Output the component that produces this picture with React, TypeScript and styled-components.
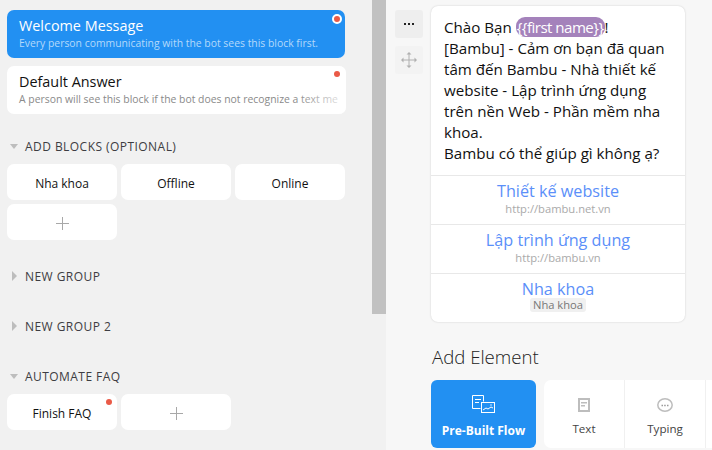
import React from 'react';
import styled, {createGlobalStyle} from 'styled-components';

const GlobalStyle = createGlobalStyle`
	html, body {
		margin: 0;
		height: 100%;
		overflow: hidden;
	}
	body {
		font-family: 'Open Sans', 'Noto Sans', sans-serif;
	}
`;

const Page = styled.div`
	display: flex;
	width: 712px;
	height: 450px;
	overflow: hidden;
	background: #f7f7f7;
`;

const Sidebar = styled.div`
	position: relative;
	flex: none;
	width: 386px;
	height: 450px;
	box-sizing: border-box;
	padding: 10px 0 0 7px;
	background: #f1f1f1;
	overflow: hidden;
`;

const Scrollbar = styled.div`
	position: absolute;
	top: 0;
	left: 372px;
	width: 14px;
	height: 314px;
	background: #c1c1c1;
`;

const MainBlock = styled.div<{$active?: boolean}>`
	position: relative;
	box-sizing: border-box;
	width: ${(p) => (p.$active ? '338px' : '339px')};
	height: 48px;
	margin-bottom: 8px;
	padding: 6px 12px 0;
	border-radius: 7px;
	background: ${(p) => (p.$active ? '#2290f2' : '#fff')};
	overflow: hidden;
`;

const BlockTitle = styled.div<{$active?: boolean}>`
	font-size: 14.4px;
	line-height: 20px;
	color: ${(p) => (p.$active ? '#fff' : '#111')};
	white-space: nowrap;
`;

const BlockHint = styled.div<{$active?: boolean}>`
	font-size: 10.4px;
	line-height: 14px;
	color: ${(p) => (p.$active ? '#b4d9fa' : '#8a8a8a')};
	white-space: nowrap;
`;

const HintFade = styled.div`
	position: absolute;
	top: 0;
	right: 0;
	width: 50px;
	height: 100%;
	background: linear-gradient(to right, rgba(255, 255, 255, 0), rgba(255, 255, 255, 0.85));
`;

const Dot = styled.span<{$ring?: boolean; $top: number; $right: number}>`
	position: absolute;
	z-index: 1;
	top: ${(p) => p.$top}px;
	right: ${(p) => p.$right}px;
	box-sizing: content-box;
	width: 6px;
	height: 6px;
	border-radius: 50%;
	background: #ea5a47;
	border: ${(p) => (p.$ring ? '2px solid #fff' : 'none')};
`;

const GroupHeader = styled.div<{$top: number}>`
	display: flex;
	align-items: center;
	height: 16px;
	margin-top: ${(p) => p.$top}px;
	padding-left: 3px;
	font-size: 12px;
	letter-spacing: 0.45px;
	color: #3d3d42;
	white-space: nowrap;
`;

const ArrowBox = styled.span`
	display: flex;
	justify-content: center;
	width: 8px;
	margin-right: 7px;
`;

const ArrowDown = styled.span`
	width: 0;
	height: 0;
	border-left: 4px solid transparent;
	border-right: 4px solid transparent;
	border-top: 5px solid #bdbdbd;
`;

const ArrowRight = styled.span`
	width: 0;
	height: 0;
	border-top: 5px solid transparent;
	border-bottom: 5px solid transparent;
	border-left: 5px solid #bdbdbd;
`;

const BlockGrid = styled.div`
	display: grid;
	grid-template-columns: repeat(3, 110px);
	grid-auto-rows: 36px;
	gap: 4px;
	margin-top: 10px;
`;

const SmallBlock = styled.div`
	position: relative;
	display: flex;
	align-items: center;
	justify-content: center;
	box-sizing: border-box;
	padding-top: 2px;
	border-radius: 7px;
	background: #fff;
	font-size: 12px;
	color: #111;
`;

const Plus = () => (
	<svg width='13' height='13' viewBox='0 0 13 13'>
		<path d='M6.5 0v13M0 6.5h13' stroke='#a8a8a8' strokeWidth='1' />
	</svg>
);

const Content = styled.div`
	flex: 1;
	display: flex;
	align-items: flex-start;
	padding: 6px 0 0 9px;
	min-width: 0;
`;

const ToolColumn = styled.div`
	flex: none;
	display: flex;
	flex-direction: column;
	gap: 8px;
	width: 28px;
	margin: 4px 8px 0 0;
`;

const ToolButton = styled.div<{$dark?: boolean}>`
	display: flex;
	align-items: center;
	justify-content: center;
	height: 28px;
	border-radius: 3px;
	background: ${(p) => (p.$dark ? '#eeeeee' : '#f3f3f3')};
`;

const Editor = styled.div`
	flex: none;
	width: 281px;
`;

const Card = styled.div`
	box-sizing: border-box;
	width: 254px;
	border-radius: 7px;
	background: #fff;
	box-shadow: 0 0 2px rgba(0, 0, 0, 0.18);
	overflow: hidden;
`;

const Message = styled.div`
	padding: 11px 12px 11px 13px;
	font-size: 15.15px;
	line-height: 21px;
	color: #111;
`;

const Variable = styled.span`
	padding: 0 1px;
	border-radius: 9px;
	background: #a482bb;
	color: #fff;
	letter-spacing: -0.55px;
`;

const CardButton = styled.div`
	height: 42px;
	border-top: 1px solid #e8e8e8;
	text-align: center;
	padding-top: 6px;
	box-sizing: content-box;
`;

const ButtonTitle = styled.div`
	font-size: 16.2px;
	line-height: 18px;
	color: #5b8ff9;
`;

const ButtonLink = styled.div`
	margin-top: 2px;
	font-size: 11.2px;
	line-height: 13px;
	color: #aaa;
`;

const ButtonTag = styled.div`
	width: fit-content;
	margin: 0 auto;
	padding: 0 3px;
	border-radius: 3px;
	background: #f0f0f0;
	font-size: 11.2px;
	line-height: 14px;
	color: #777;
`;

const SectionTitle = styled.div`
	margin: 22px 0 10px 1px;
	font-size: 18.6px;
	line-height: 26px;
	font-weight: 300;
	color: #222;
`;

const ElementRow = styled.div`
	display: flex;
	gap: 8px;
`;

const FlowButton = styled.div`
	flex: none;
	display: flex;
	flex-direction: column;
	align-items: center;
	width: 105px;
	height: 68px;
	box-sizing: border-box;
	padding-top: 15px;
	border-radius: 6px;
	background: #2290f2;
	color: #fff;
	font-size: 12px;
	font-weight: 700;
`;

const FlowLabel = styled.div`
	margin-top: 10px;
	line-height: 16px;
	white-space: nowrap;
`;

const ElementGroup = styled.div`
	display: flex;
	flex: 1;
	height: 68px;
	border-radius: 7px 0 0 7px;
	background: #fff;
`;

const ElementItem = styled.div`
	flex: none;
	display: flex;
	flex-direction: column;
	align-items: center;
	width: 81px;
	box-sizing: border-box;
	padding-top: 18px;
	border-right: 1px solid #f0f0f0;
	font-size: 11.6px;
	color: #444;
`;

const ElementLabel = styled.div`
	margin-top: 9px;
	line-height: 16px;
`;

const Dots = () => (
	<svg width='12' height='12' viewBox='0 0 12 12' fill='#222'>
		<rect x='1' y='5' width='2' height='2' />
		<rect x='5' y='5' width='2' height='2' />
		<rect x='9' y='5' width='2' height='2' />
	</svg>
);

const MoveIcon = () => (
	<svg width='16' height='16' viewBox='0 0 16 16' fill='none'>
		<path d='M8 1v14M1 8h14' stroke='#b0b0b0' strokeWidth='1' />
		<path
			d='M8 0l2.5 2.5h-5zM8 16l2.5-2.5h-5zM0 8l2.5-2.5v5zM16 8l-2.5-2.5v5z'
			fill='#b0b0b0'
		/>
	</svg>
);

const FlowIcon = () => (
	<svg width='23' height='18' viewBox='0 0 23 18' fill='none' stroke='#fff' strokeWidth='1'>
		<path d='M8.5 13.5H.5V.5h11v6' />
		<path d='M3 4.5h6M3 7.5h4' />
		<rect x='9.5' y='7.5' width='13' height='10' />
		<path d='M11 15l3-2 2 1 3-2 2 1' />
		<circle cx='19' cy='10' r='0.7' fill='#fff' stroke='none' />
	</svg>
);

const TextIcon = () => (
	<svg width='12' height='14' viewBox='0 0 12 14'>
		<path fillRule='evenodd' d='M0 0h12v14H0zM2 2v10h8V2z' fill='#bdbdbd' />
		<path d='M3 4h6v1.5H3zM3 7h4v1.5H3z' fill='#bdbdbd' />
	</svg>
);

const TypingIcon = () => (
	<svg width='16' height='14' viewBox='0 0 16 14' fill='none'>
		<ellipse cx='8' cy='7' rx='7.2' ry='6.2' stroke='#bdbdbd' strokeWidth='1.5' />
		<path d='M4.5 7.5h1.5M7.2 7.5h1.5M10 7.5h1.5' stroke='#9a9a9a' strokeWidth='1.5' />
	</svg>
);

const App: React.FC = () => {
	return (
		<Page>
			<GlobalStyle />
			<Sidebar>
				<Scrollbar />
				<MainBlock $active>
					<Dot $ring $top={4} $right={3} />
					<BlockTitle $active>Welcome Message</BlockTitle>
					<BlockHint $active>Every person communicating with the bot sees this block first.</BlockHint>
				</MainBlock>
				<MainBlock>
					<Dot $top={5} $right={6} />
					<BlockTitle>Default Answer</BlockTitle>
					<BlockHint>A person will see this block if the bot does not recognize a text me</BlockHint>
					<HintFade />
				</MainBlock>

				<GroupHeader $top={24}>
					<ArrowBox><ArrowDown /></ArrowBox>
					ADD BLOCKS (OPTIONAL)
				</GroupHeader>
				<BlockGrid>
					<SmallBlock>Nha khoa</SmallBlock>
					<SmallBlock>Offline</SmallBlock>
					<SmallBlock>Online</SmallBlock>
					<SmallBlock><Plus /></SmallBlock>
				</BlockGrid>

				<GroupHeader $top={28}>
					<ArrowBox><ArrowRight /></ArrowBox>
					NEW GROUP
				</GroupHeader>
				<GroupHeader $top={34}>
					<ArrowBox><ArrowRight /></ArrowBox>
					NEW GROUP 2
				</GroupHeader>
				<GroupHeader $top={34}>
					<ArrowBox><ArrowDown /></ArrowBox>
					AUTOMATE FAQ
				</GroupHeader>
				<BlockGrid>
					<SmallBlock>
						<Dot $top={5} $right={5} />
						Finish FAQ
					</SmallBlock>
					<SmallBlock><Plus /></SmallBlock>
				</BlockGrid>
			</Sidebar>

			<Content>
				<ToolColumn>
					<ToolButton $dark><Dots /></ToolButton>
					<ToolButton><MoveIcon /></ToolButton>
				</ToolColumn>
				<Editor>
					<Card>
						<Message>
							Chào Bạn <Variable>{'{{first name}}'}</Variable>!
							<br />
							[Bambu] - Cảm ơn bạn đã quan tâm đến Bambu - Nhà thiết kế website - Lập trình ứng dụng trên nền Web - Phần mềm nha khoa.
							<br />
							Bambu có thể giúp gì không ạ?
						</Message>
						<CardButton>
							<ButtonTitle>Thiết kế website</ButtonTitle>
							<ButtonLink>http://bambu.net.vn</ButtonLink>
						</CardButton>
						<CardButton>
							<ButtonTitle>Lập trình ứng dụng</ButtonTitle>
							<ButtonLink>http://bambu.vn</ButtonLink>
						</CardButton>
						<CardButton>
							<ButtonTitle>Nha khoa</ButtonTitle>
							<ButtonTag>Nha khoa</ButtonTag>
						</CardButton>
					</Card>
					<SectionTitle>Add Element</SectionTitle>
					<ElementRow>
						<FlowButton>
							<FlowIcon />
							<FlowLabel>Pre-Built Flow</FlowLabel>
						</FlowButton>
						<ElementGroup>
							<ElementItem>
								<TextIcon />
								<ElementLabel>Text</ElementLabel>
							</ElementItem>
							<ElementItem>
								<TypingIcon />
								<ElementLabel>Typing</ElementLabel>
							</ElementItem>
						</ElementGroup>
					</ElementRow>
				</Editor>
			</Content>
		</Page>
	);
};

export default App;
